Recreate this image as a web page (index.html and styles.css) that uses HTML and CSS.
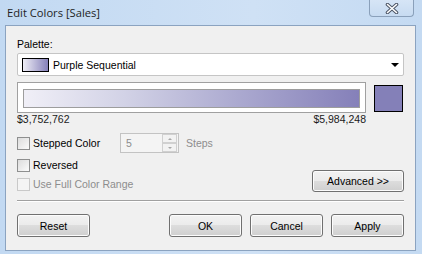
FILE: index.html
```html
<!DOCTYPE html>
<html lang="en">
<head>
    <meta charset="UTF-8">
    <title>Edit Colors [Sales]</title>
    <link rel="stylesheet" href="styles.css">
</head>
<body>
    <div class="window">
        <div class="titlebar">
            <span class="title">Edit Colors [Sales]</span>
            <div class="close-btn">
                <svg width="14" height="11" viewBox="0 0 14 11">
                    <path d="M2.5 1.5 L11.5 9.5 M11.5 1.5 L2.5 9.5" stroke="#4c5566" stroke-width="3.6" stroke-linecap="round"/>
                    <path d="M2.5 1.5 L11.5 9.5 M11.5 1.5 L2.5 9.5" stroke="#ffffff" stroke-width="1.6" stroke-linecap="round"/>
                </svg>
            </div>
        </div>

        <div class="client">
            <!-- Palette -->
            <div class="label">Palette:</div>
            <div class="dropdown">
                <span class="mini-swatch"></span>
                <span class="dropdown-text">Purple Sequential</span>
                <span class="arrow"></span>
            </div>

            <!-- Gradient preview -->
            <div class="gradient-row">
                <div class="gradient-frame">
                    <div class="gradient-bar"></div>
                </div>
                <div class="end-swatch"></div>
            </div>
            <div class="range-labels">
                <span>$3,752,762</span>
                <span>$5,984,248</span>
            </div>

            <!-- Options -->
            <div class="option-row stepped">
                <label class="check"><span class="box"></span>Stepped Color</label>
                <div class="spin">
                    <span class="spin-value">5</span>
                    <div class="spin-buttons">
                        <span class="spin-up"></span>
                        <span class="spin-down"></span>
                    </div>
                </div>
                <span class="steps">Steps</span>
            </div>
            <div class="option-row reversed">
                <label class="check"><span class="box"></span>Reversed</label>
            </div>
            <div class="option-row last">
                <label class="check disabled"><span class="box"></span>Use Full Color Range</label>
                <button class="btn advanced">Advanced &gt;&gt;</button>
            </div>

            <div class="separator"></div>

            <!-- Buttons -->
            <div class="button-row">
                <button class="btn">Reset</button>
                <div class="right-buttons">
                    <button class="btn">OK</button>
                    <button class="btn">Cancel</button>
                    <button class="btn">Apply</button>
                </div>
            </div>
        </div>
    </div>
</body>
</html>
```

FILE: styles.css
```css
body {
    margin: 0;
    padding: 0;
    font-family: "Liberation Sans", Arial, sans-serif;
    font-size: 10.5px;
    color: #000;
    background: #c6dcf3;
}

.window {
    width: 422px;
    height: 254px;
    background: linear-gradient(to right, #c2d9f2, #cfe1f5 60%, #c4daf2);
}

.titlebar {
    height: 25px;
    display: flex;
    justify-content: space-between;
    align-items: flex-start;
}

.title {
    font-family: "Open Sans", sans-serif;
    font-size: 11.2px;
    margin: 5px 0 0 7px;
    color: #1e1e1e;
}

.close-btn {
    width: 43px;
    height: 16px;
    margin-right: 8px;
    border: 1px solid #8aa0ba;
    border-top: none;
    border-radius: 0 0 4px 4px;
    background: linear-gradient(#d6e5f6, #c7dbf1);
    display: flex;
    justify-content: center;
    align-items: center;
}

.client {
    margin: 0 6px 0 5px;
    height: 224px;
    border: 1px solid #8ba3c0;
    background: #f0f0f0;
    padding: 0 11px;
}

.label {
    margin-top: 11px;
    height: 15px;
    line-height: 15px;
}

.dropdown {
    margin-top: 1px;
    height: 21px;
    border: 1px solid #c5c5c5;
    border-radius: 2px;
    background: #fff;
    display: flex;
    align-items: center;
    padding-left: 4px;
}

.mini-swatch {
    width: 25px;
    height: 12px;
    border: 1px solid #000;
    background: linear-gradient(to right, #efeef6, #8580b9);
}

.dropdown-text {
    margin-left: 4px;
    flex: 1;
}

.arrow {
    width: 0;
    height: 0;
    border-left: 4px solid transparent;
    border-right: 4px solid transparent;
    border-top: 4px solid #000;
    margin-right: 4px;
}

.gradient-row {
    margin-top: 6px;
    display: flex;
    align-items: flex-start;
}

.gradient-frame {
    width: 349px;
    height: 31px;
    border: 1px solid #a0a0a0;
    background: #fff;
    padding: 6px 0 0 5px;
    box-sizing: border-box;
}

.gradient-bar {
    width: 335px;
    height: 17px;
    border: 1px solid #9d9d9d;
    background: linear-gradient(to right, #f0eff7, #d2d2e6 30%, #aaa8cf 65%, #8580b9);
}

.end-swatch {
    margin: 3px 0 0 8px;
    width: 27px;
    height: 25px;
    border: 1px solid #000;
    background: #8480b8;
}

.range-labels {
    width: 349px;
    display: flex;
    justify-content: space-between;
    height: 13px;
    line-height: 13px;
    color: #1a1a1a;
}

.option-row {
    display: flex;
    align-items: center;
    height: 20px;
}

.option-row.stepped {
    margin-top: 7px;
}

.option-row.reversed {
    margin-top: 2px;
}

.option-row.last {
    justify-content: space-between;
    height: 18px;
}

.check {
    display: flex;
    align-items: center;
}

.box {
    width: 11px;
    height: 11px;
    border: 1px solid #8e8f8f;
    background: linear-gradient(135deg, #dcdcdc, #fbfbfb);
    margin-right: 3px;
}

.check.disabled {
    color: #8d8d8d;
}

.check.disabled .box {
    border-color: #c9c9c9;
    background: #f4f4f4;
}

.stepped .check {
    width: 103px;
}

.spin {
    width: 57px;
    height: 18px;
    border: 1px solid #c3c3c3;
    background: #f4f4f4;
    display: flex;
    align-items: center;
    justify-content: space-between;
}

.spin-value {
    margin-left: 5px;
    color: #8d8d8d;
}

.spin-buttons {
    width: 15px;
    height: 18px;
    display: flex;
    flex-direction: column;
    margin-right: 1px;
}

.spin-up, .spin-down {
    flex: 1;
    border: 1px solid #d0d0d0;
    background: #f2f2f2;
    position: relative;
}

.spin-up::after, .spin-down::after {
    content: "";
    position: absolute;
    left: 5px;
    top: 3px;
    border-left: 2px solid transparent;
    border-right: 2px solid transparent;
}

.spin-up::after {
    border-bottom: 2px solid #a6a6a6;
}

.spin-down::after {
    border-top: 2px solid #a6a6a6;
}

.steps {
    margin-left: 7px;
    color: #8d8d8d;
}

.btn {
    font-family: "Liberation Sans", Arial, sans-serif;
    font-size: 10.5px;
    color: #000;
    width: 73px;
    height: 23px;
    padding: 0;
    border: 1px solid #707070;
    border-radius: 3px;
    background: linear-gradient(#f2f2f2, #ebebeb 50%, #dddddd 50%, #cfcfcf);
    box-shadow: inset 0 0 0 1px #fcfcfc;
}

.btn.advanced {
    width: 92px;
    height: 22px;
    align-self: flex-start;
    margin-top: -5px;
}

.separator {
    margin-top: 7px;
    height: 1px;
    background: #a0a0a0;
    border-bottom: 1px solid #fff;
}

.button-row {
    margin-top: 12px;
    display: flex;
    justify-content: space-between;
}

.right-buttons {
    display: flex;
    gap: 8px;
}
```
